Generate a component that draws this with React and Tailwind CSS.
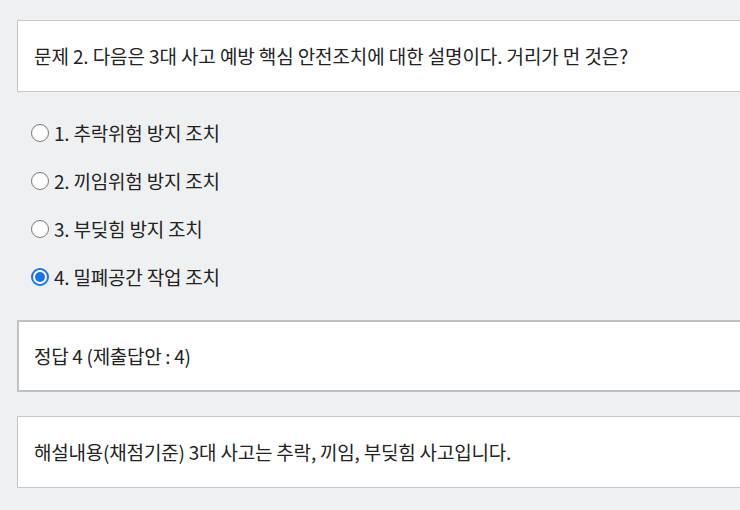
import React from "react";

const font = { fontFamily: '"Noto Sans CJK KR", "Noto Sans", sans-serif' };

function Radio({ checked }) {
  return checked ? (
    <span className="w-[18px] h-[18px] rounded-full border-[2px] border-[#1a73e8] bg-white flex items-center justify-center shrink-0">
      <span className="w-[10px] h-[10px] rounded-full bg-[#1a73e8]" />
    </span>
  ) : (
    <span className="w-[18px] h-[18px] rounded-full border border-[#7a7a7a] bg-white shrink-0" />
  );
}

export default function App() {
  const options = [
    { t: "1. 추락위험 방지 조치", c: false },
    { t: "2. 끼임위험 방지 조치", c: false },
    { t: "3. 부딪힘 방지 조치", c: false },
    { t: "4. 밀폐공간 작업 조치", c: true },
  ];
  return (
    <div
      className="w-[740px] h-[510px] overflow-hidden bg-[#eff0f2] pt-[20px] pl-[17px] text-[#222222]"
      style={font}
    >
      <div className="h-[72px] bg-white border border-r-0 border-[#c6c6c6] flex items-center pl-[16px] text-[19px] tracking-[-0.1px]">
        문제 2. 다음은 3대 사고 예방 핵심 안전조치에 대한 설명이다. 거리가 먼 것은?
      </div>
      <div className="mt-[17px] flex flex-col">
        {options.map((o) => (
          <div key={o.t} className="h-[48px] flex items-center pl-[14px] gap-[5px] text-[19px] tracking-[-0.2px]">
            <Radio checked={o.c} />
            <span>{o.t}</span>
          </div>
        ))}
      </div>
      <div className="mt-[19px] h-[72px] bg-white border-2 border-r-0 border-[#c0c0c0] flex items-center pl-[15px] text-[19px] tracking-[-0.3px]">
        정답 4 (제출답안 : 4)
      </div>
      <div className="mt-[24px] h-[72px] bg-white border border-r-0 border-[#c6c6c6] flex items-center pl-[16px] text-[19px] tracking-[-0.2px]">
        해설내용(채점기준) 3대 사고는 추락, 끼임, 부딪힘 사고입니다.
      </div>
    </div>
  );
}
